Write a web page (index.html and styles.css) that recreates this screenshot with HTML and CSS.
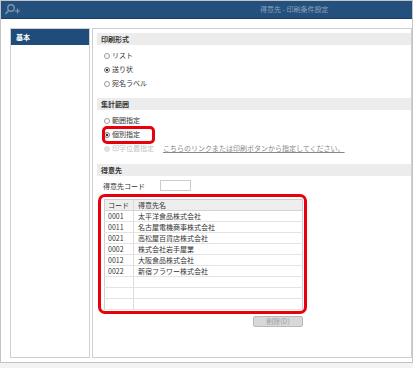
FILE: index.html
```html
<!DOCTYPE html>
<html lang="ja">
<head>
	<meta charset="UTF-8">
	<title>得意先 - 印刷条件設定</title>
	<link rel="stylesheet" href="styles.css">
</head>
<body>
	<div class="window">
		<div class="titlebar">
			<svg class="appicon" width="18" height="13" viewBox="0 0 18 13">
				<circle cx="8" cy="5" r="3.2" fill="none" stroke="#7f95ad" stroke-width="1.4"/>
				<line x1="5.6" y1="7.4" x2="2.5" y2="11" stroke="#7f95ad" stroke-width="1.6"/>
				<line x1="14.5" y1="5.5" x2="14.5" y2="10.5" stroke="#7f95ad" stroke-width="1.2"/>
				<line x1="12" y1="8" x2="17" y2="8" stroke="#7f95ad" stroke-width="1.2"/>
			</svg>
			<span class="title">得意先 - 印刷条件設定</span>
		</div>
		<div class="content">
			<div class="sidebar">
				<div class="tab cur">基本</div>
			</div>
			<div class="main">
				<h2 class="secHead">印刷形式</h2>
				<ul class="radios">
					<li><span class="radio"></span>リスト</li>
					<li><span class="radio checked"></span>送り状</li>
					<li><span class="radio"></span>宛名ラベル</li>
				</ul>

				<h2 class="secHead">集計範囲</h2>
				<ul class="radios">
					<li><span class="radio"></span>範囲指定</li>
					<li class="mark"><span class="radio checked"></span>個別指定</li>
					<li class="disabled"><span class="radio"></span>印字位置指定<a href="#" class="hint">こちらのリンクまたは印刷ボタンから指定してください。</a></li>
				</ul>

				<h2 class="secHead last">得意先</h2>
				<div class="codeRow">
					<label class="codeLabel">得意先コード</label>
					<input type="text" class="codeInput">
				</div>
				<div class="tableBox">
					<table class="list">
						<tr class="head"><td class="c1">コード</td><td>得意先名</td></tr>
						<tr><td class="c1">0001</td><td>太平洋食品株式会社</td></tr>
						<tr><td class="c1">0011</td><td>名古屋電機商事株式会社</td></tr>
						<tr><td class="c1">0021</td><td>高松屋百貨店株式会社</td></tr>
						<tr><td class="c1">0002</td><td>株式会社岩手屋業</td></tr>
						<tr><td class="c1">0012</td><td>大阪食品株式会社</td></tr>
						<tr><td class="c1">0022</td><td>新宿フラワー株式会社</td></tr>
						<tr><td class="c1"></td><td></td></tr>
						<tr><td class="c1"></td><td></td></tr>
						<tr><td class="c1"></td><td></td></tr>
					</table>
				</div>
				<div class="btnRow">
					<button class="btn" disabled>削除(D)</button>
				</div>
			</div>
		</div>
	</div>
</body>
</html>
```

FILE: styles.css
```css
*{
	margin: 0;
	padding: 0;
}
body{
	background-color: #f3f3f3;
	font-family: "Noto Sans CJK JP", "Noto Sans", sans-serif;
	font-size: 7px;
	color: #333;
}
.window{
	width: 411px;
	height: 361px;
	border: 1px solid #c4c4c4;
	background-color: #fff;
}
.titlebar{
	height: 17px;
	border-bottom: 1px solid #173d63;
	background-color: #24507e;
	display: flex;
	align-items: center;
}
.appicon{
	display: block;
	margin-left: 2px;
}
.title{
	margin-left: 239px;
	color: #8ea2ba;
	font-size: 7px;
	line-height: 17px;
}
.content{
	display: flex;
	gap: 2px;
	height: 330px;
	padding: 9px 0 4px 9px;
}
.sidebar{
	width: 78px;
	border: 1px solid #cfcfcf;
}
.sidebar .tab{
	height: 16px;
	line-height: 16px;
	padding-left: 5px;
	font-weight: bold;
}
.sidebar .tab.cur{
	background-color: #1f4c7a;
	color: #fff;
}
.main{
	flex: 1;
	border: 1px solid #cfcfcf;
	padding: 4px 0 0 4px;
}
.secHead{
	height: 12px;
	line-height: 12px;
	padding-left: 4px;
	background-color: #ececec;
	font-size: 7px;
	font-weight: bold;
	color: #333;
}
.radios{
	list-style: none;
	padding: 3px 0 8px 7px;
}
.radios li{
	height: 14px;
	line-height: 14px;
	position: relative;
}
.radio{
	display: inline-block;
	width: 6px;
	height: 6px;
	box-sizing: border-box;
	border: 1px solid #9a9a9a;
	border-radius: 50%;
	margin-right: 2px;
	vertical-align: -1px;
	background-color: #fff;
}
.radio.checked{
	background: radial-gradient(circle, #333 0, #333 1.3px, #fff 1.6px);
	border-color: #777;
}
.radios li.disabled{
	color: #c4c4c4;
}
.radios li.disabled .radio{
	background-color: #e2e2e2;
	border-color: #dcdcdc;
}
.hint{
	margin-left: 9px;
	color: #8a8a8a;
	text-decoration: underline;
}
/* 赤枠の注記 */
.radios li.mark::after{
	content: "";
	position: absolute;
	left: -2px;
	top: -1px;
	width: 53px;
	height: 18px;
	box-sizing: border-box;
	border: 3px solid #e8000b;
	border-radius: 5px;
}
.secHead.last{
	margin-top: 1px;
}
.codeRow{
	display: flex;
	align-items: center;
	height: 11px;
	margin-top: 4px;
	padding-left: 6px;
}
.codeLabel{
	width: 57px;
}
.codeInput{
	width: 31px;
	height: 11px;
	box-sizing: border-box;
	border: 1px solid #cdcdcd;
}
.tableBox{
	width: 199px;
	margin: 3px 0 0 1px;
	padding: 2px 1px 1px 3px;
	border: 3px solid #e8000b;
	border-radius: 7px;
}
.list{
	width: 199px;
	border-collapse: collapse;
	border: 1px solid #cfcfcf;
}
.list td{
	height: 10px;
	line-height: 10px;
	padding: 0 0 0 4px;
	border-bottom: 1px solid #e3e3e3;
	white-space: nowrap;
}
.list td.c1{
	width: 25px;
	padding-left: 3px;
	border-right: 1px solid #dcdcdc;
}
.list tr.head td{
	background-color: #eeeeee;
	border-bottom-color: #d4d4d4;
}
.btnRow{
	width: 205px;
	margin: 2px 0 0 1px;
	padding-right: 4px;
	text-align: right;
}
.btn{
	width: 50px;
	height: 11px;
	line-height: 9px;
	font-family: "Noto Sans CJK JP", "Noto Sans", sans-serif;
	font-size: 7px;
	color: #a0a0a0;
	background-color: #d8d8d8;
	border: 1px solid #b9b9b9;
	border-radius: 2px;
	vertical-align: top;
}
```
